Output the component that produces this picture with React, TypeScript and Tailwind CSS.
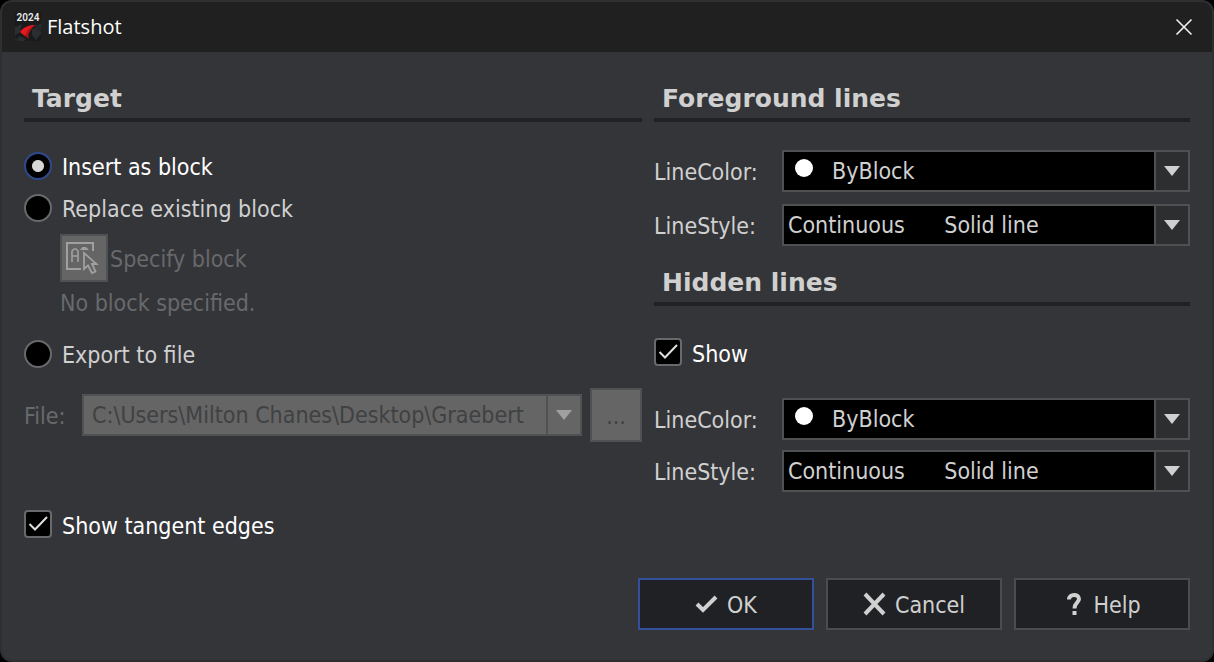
import { useState } from "react";
import type { ReactNode } from "react";

function SectionHeading({ children }: { children: ReactNode }) {
  return (
    <h2 className="border-b-4 border-[#1f2124] pb-1 pl-2 font-['DejaVu_Sans',sans-serif] text-[25px] leading-[30px] font-bold text-[#d0d0d0]">
      {children}
    </h2>
  );
}

function DropArrow({ disabled = false }: { disabled?: boolean }) {
  return (
    <span
      className={
        disabled
          ? "pointer-events-none absolute inset-y-0 right-0 flex w-9 items-center justify-center border-2 border-[#505152] bg-[#656565] text-[#a0a0a0]"
          : "pointer-events-none absolute inset-y-0 right-0 flex w-9 items-center justify-center border-2 border-[#4f5051] bg-[#2d2e2f] text-[#d0d0d0]"
      }
    >
      <svg width="16" height="10" viewBox="0 0 16 10" fill="currentColor" aria-hidden="true">
        <path d="M0 0H16L8 10Z" />
      </svg>
    </span>
  );
}

function RadioRow({
  label,
  checked,
  onSelect,
}: {
  label: string;
  checked: boolean;
  onSelect: () => void;
}) {
  return (
    <label className={checked ? "flex h-[42px] items-center gap-[10px] text-white" : "flex h-[42px] items-center gap-[10px] text-[#d0d0d0]"}>
      <input
        type="radio"
        name="target"
        checked={checked}
        onChange={onSelect}
        className="size-7 shrink-0 appearance-none rounded-full border-2 border-[#68696b] bg-black checked:border-[#2f4a8c] checked:bg-[radial-gradient(circle,#d6d6d6_5.5px,#000_6.5px)]"
      />
      <span className="pt-[2px]">{label}</span>
    </label>
  );
}

function CheckRow({ label }: { label: string }) {
  const [on, setOn] = useState(true);
  return (
    <label className="flex h-7 items-center gap-[10px] text-white">
      <span className="relative size-7 shrink-0">
        <input
          type="checkbox"
          checked={on}
          onChange={() => setOn(!on)}
          className="block size-7 appearance-none rounded-[4px] border-2 border-[#68696b] bg-black"
        />
        {on && (
          <svg
            className="pointer-events-none absolute inset-0"
            width="28"
            height="28"
            viewBox="0 0 28 28"
            fill="none"
            stroke="#e0e0e0"
            strokeWidth="2"
            aria-hidden="true"
          >
            <path d="M5.5 14L11 19.5L23 7" />
          </svg>
        )}
      </span>
      <span className="pt-1">{label}</span>
    </label>
  );
}

function ColorRow({ id }: { id: string }) {
  return (
    <div className="flex h-[42px] items-center">
      <label htmlFor={id} className="w-32 shrink-0 pt-[2px]">
        LineColor:
      </label>
      <div className="relative flex-1">
        <select
          id={id}
          className="block h-[42px] w-full appearance-none border-2 border-[#4f5051] bg-black pr-9 pl-12 text-[#d0d0d0]"
        >
          <option>ByBlock</option>
        </select>
        <span className="pointer-events-none absolute top-[9px] left-[13px] size-[18px] rounded-full bg-white" />
        <DropArrow />
      </div>
    </div>
  );
}

function StyleRow({ id }: { id: string }) {
  return (
    <div className="flex h-[42px] items-center">
      <label htmlFor={id} className="w-32 shrink-0 pt-[2px]">
        LineStyle:
      </label>
      <div className="relative flex-1">
        <select
          id={id}
          className="block h-[42px] w-full appearance-none border-2 border-[#4f5051] bg-black pr-9 pl-1 text-[#d0d0d0]"
        >
          <option>{"Continuous\u00a0\u00a0\u00a0\u00a0\u00a0\u00a0Solid line"}</option>
        </select>
        <DropArrow />
      </div>
    </div>
  );
}

function FooterButton({
  icon,
  label,
  primary = false,
}: {
  icon: ReactNode;
  label: string;
  primary?: boolean;
}) {
  return (
    <button
      type="button"
      className={
        primary
          ? "flex h-[52px] w-44 items-center justify-center gap-2 border-2 border-[#34509a] bg-[#1f2124]"
          : "flex h-[52px] w-44 items-center justify-center gap-2 border-2 border-[#4b4c4e] bg-[#1f2124]"
      }
    >
      {icon}
      <span className="pt-[2px]">{label}</span>
    </button>
  );
}

function AppLogo() {
  return (
    <svg width="28" height="30" viewBox="0 0 28 30" aria-hidden="true">
      <rect x="1" y="1" width="26" height="28" fill="#191a1b" />
      <path d="M1 15L8 12L6 20L1 24ZM18 18L27 11V22L22 28L18 23ZM5 24L12 27L10 29H3Z" fill="#2b2e30" />
      <path d="M21 12L27 15V20L20 17ZM1 25L6 29H1Z" fill="#242729" />
      <path d="M21 13C15 13 10 15 6 20L15 27C13 23 16 18 21 13Z" fill="#b51217" />
      <path d="M21 13C15 13 10 15 6 20L11 24C12 19 16 15 21 13Z" fill="#e01a1e" />
      <text x="14" y="9" textAnchor="middle" fontSize="10" fontWeight="600" fill="#e8e8e8" fontFamily="Roboto, sans-serif">
        2024
      </text>
    </svg>
  );
}

export default function App() {
  const [target, setTarget] = useState("insert");

  return (
    <div className="min-h-screen bg-black">
      <main className="flex min-h-screen flex-col overflow-hidden rounded-xl border-2 border-[#2e2f30] bg-[#343539] font-['DejaVu_Sans_Condensed','Noto_Sans',sans-serif] text-[23px] leading-8 text-[#d0d0d0]">
        <header className="flex h-[50px] items-center bg-[#202020] pr-[15px] pl-3">
          <AppLogo />
          <h1 className="ml-[5px] flex-1 font-['Open_Sans',sans-serif] text-xl text-white">Flatshot</h1>
          <button type="button" aria-label="Close" className="p-1">
            <svg width="18" height="18" viewBox="0 0 18 18" fill="none" stroke="#f0f0f0" strokeWidth="1.6" aria-hidden="true">
              <path d="M1.5 1.5L16.5 16.5M16.5 1.5L1.5 16.5" />
            </svg>
          </button>
        </header>

        <div className="grid grid-cols-[618fr_536fr] gap-3 px-[22px] pt-8">
          <section>
            <SectionHeading>Target</SectionHeading>
            <div className="mt-[23px]">
              <RadioRow label="Insert as block" checked={target === "insert"} onSelect={() => setTarget("insert")} />
              <RadioRow label="Replace existing block" checked={target === "replace"} onSelect={() => setTarget("replace")} />
            </div>
            <div className="mt-[5px] pl-9 text-[#68696b]">
              <div className="flex items-center gap-[2px]">
                <button
                  id="specify"
                  type="button"
                  disabled
                  aria-label="Specify block"
                  className="flex size-12 items-center justify-center border-2 border-[#505152] bg-[#656565]"
                >
                  <svg width="40" height="40" viewBox="0 0 40 40" className="shrink-0" fill="none" stroke="#a0a0a0" strokeWidth="2" aria-hidden="true">
                    <path d="M17 31H3V5H29V13" />
                    <path d="M8 24V13L10 11H12L14 13V24M8 18H14" strokeWidth="1.600" />
                    <path d="M16 12L18.500 9H22L25 12Z" fill="#a0a0a0" stroke="none" />
                    <path d="M20 15V31L24 27.500L28 35L31.500 33.500L28 26H32.500Z" fill="#656565" strokeWidth="1.800" />
                  </svg>
                </button>
                <label htmlFor="specify" className="pt-[2px]">
                  Specify block
                </label>
              </div>
              <p className="leading-[42px]">No block specified.</p>
            </div>
            <div className="mt-[9px]">
              <RadioRow label="Export to file" checked={target === "export"} onSelect={() => setTarget("export")} />
            </div>
            <div className="mt-[13px] flex h-[54px] items-center text-[#68696b]">
              <label htmlFor="file" className="w-[58px] shrink-0 pt-[2px]">
                File:
              </label>
              <div className="relative min-w-0 flex-1">
                <select
                  id="file"
                  disabled
                  className="block h-[42px] w-full appearance-none border-2 border-[#505152] bg-[#656565] pr-[34px] pl-2 text-[#404142] disabled:opacity-100"
                >
                  <option>C:\Users\Milton Chanes\Desktop\Graebert</option>
                </select>
                <DropArrow disabled />
              </div>
              <button
                type="button"
                disabled
                className="ml-2 h-[54px] w-[52px] shrink-0 border-2 border-[#505152] bg-[#656565] pt-[2px] text-[#404142]"
              >
                ...
              </button>
            </div>
            <div className="mt-[68px]">
              <CheckRow label="Show tangent edges" />
            </div>
          </section>

          <section>
            <SectionHeading>Foreground lines</SectionHeading>
            <div className="mt-7 flex flex-col gap-3">
              <ColorRow id="fg-color" />
              <StyleRow id="fg-style" />
            </div>
            <div className="mt-[22px]">
              <SectionHeading>Hidden lines</SectionHeading>
            </div>
            <div className="my-8">
              <CheckRow label="Show" />
            </div>
            <div className="flex flex-col gap-[10px]">
              <ColorRow id="hidden-color" />
              <StyleRow id="hidden-style" />
            </div>
          </section>
        </div>

        <footer className="mt-10 flex justify-end gap-3 px-[22px] pb-[30px]">
          <FooterButton
            primary
            label="OK"
            icon={
              <svg width="24" height="20" viewBox="0 0 24 20" fill="none" stroke="#d0d0d0" strokeWidth="4" aria-hidden="true">
                <path d="M2 10L8 16L21 3" />
              </svg>
            }
          />
          <FooterButton
            label="Cancel"
            icon={
              <svg width="24" height="24" viewBox="0 0 24 24" fill="none" stroke="#d0d0d0" strokeWidth="4" aria-hidden="true">
                <path d="M2 2L21 22M21 2L2 22" />
              </svg>
            }
          />
          <FooterButton
            label="Help"
            icon={
              <svg width="22" height="24" viewBox="0 0 22 24" fill="none" stroke="#d0d0d0" strokeWidth="4" aria-hidden="true">
                <path d="M6 7.500C6 1.500 16 1.500 16 7C16 10.500 11.500 10.500 11.500 16.500" />
                <path d="M11.500 19V23" />
              </svg>
            }
          />
        </footer>
      </main>
    </div>
  );
}
